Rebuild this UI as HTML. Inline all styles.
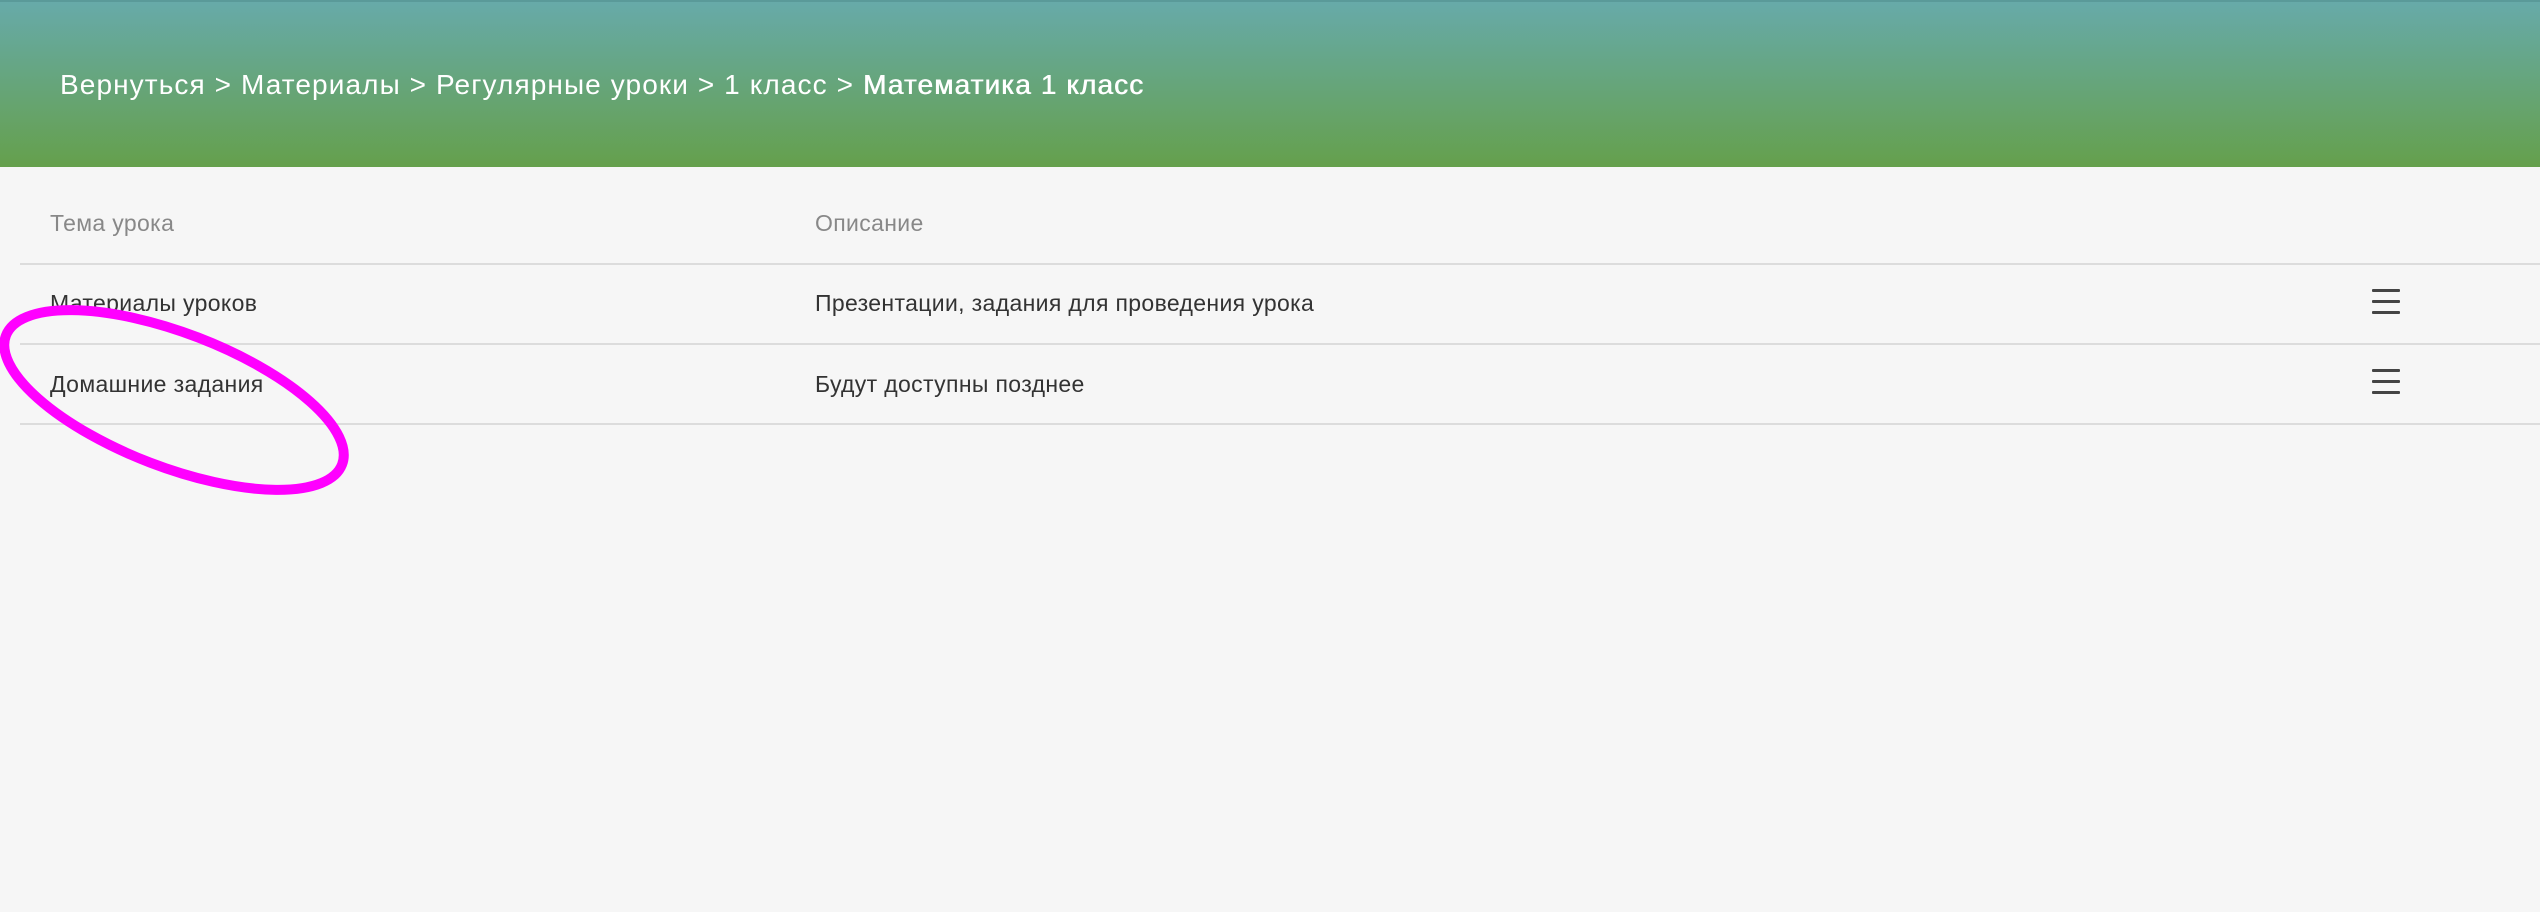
<!DOCTYPE html>
<html><head><meta charset="utf-8"><style>
html,body{margin:0;padding:0;width:2540px;height:912px;overflow:hidden;background:#f6f6f6;font-family:"Liberation Sans",sans-serif;}
.hdr{position:absolute;left:0;top:0;width:2540px;height:167px;background:linear-gradient(#67aaa9,#65a04c);border-top:2px solid #5a9a99;box-sizing:border-box;}
.bc{position:absolute;left:60px;top:67px;font-size:28px;letter-spacing:1.1px;color:#fff;white-space:nowrap;}
.bc b{font-weight:400;text-shadow:0.6px 0 0 #fff}
.t{position:absolute;font-size:23px;letter-spacing:0.35px;color:#333;white-space:nowrap;}
.h{color:#888}
.ln{position:absolute;left:20px;right:0;height:2px;background:#dcdcdc}
.hb{position:absolute;left:2372px;width:28px;height:3px;background:#444;border-radius:1px}
</style></head><body>
<div class="hdr"><div class="bc">Вернуться &gt; Материалы &gt; Регулярные уроки &gt; 1 класс &gt; <b>Математика 1 класс</b></div></div>
<div class="t h" style="left:50px;top:210px">Тема урока</div>
<div class="t h" style="left:815px;top:210px">Описание</div>
<div class="ln" style="top:263px"></div>
<div class="t" style="left:50px;top:290px">Материалы уроков</div>
<div class="t" style="left:815px;top:290px">Презентации, задания для проведения урока</div>
<div class="hb" style="top:289px"></div><div class="hb" style="top:300px"></div><div class="hb" style="top:311px"></div>
<div class="ln" style="top:343px"></div>
<div class="t" style="left:50px;top:371px">Домашние задания</div>
<div class="t" style="left:815px;top:371px">Будут доступны позднее</div>
<div class="hb" style="top:369px"></div><div class="hb" style="top:380px"></div><div class="hb" style="top:391px"></div>
<div class="ln" style="top:423px"></div>
<svg style="position:absolute;left:0;top:0" width="2540" height="912"><ellipse cx="174" cy="400" rx="180" ry="67" transform="rotate(21 174 400)" fill="none" stroke="#ff00ff" stroke-width="10"/></svg>
</body></html>
